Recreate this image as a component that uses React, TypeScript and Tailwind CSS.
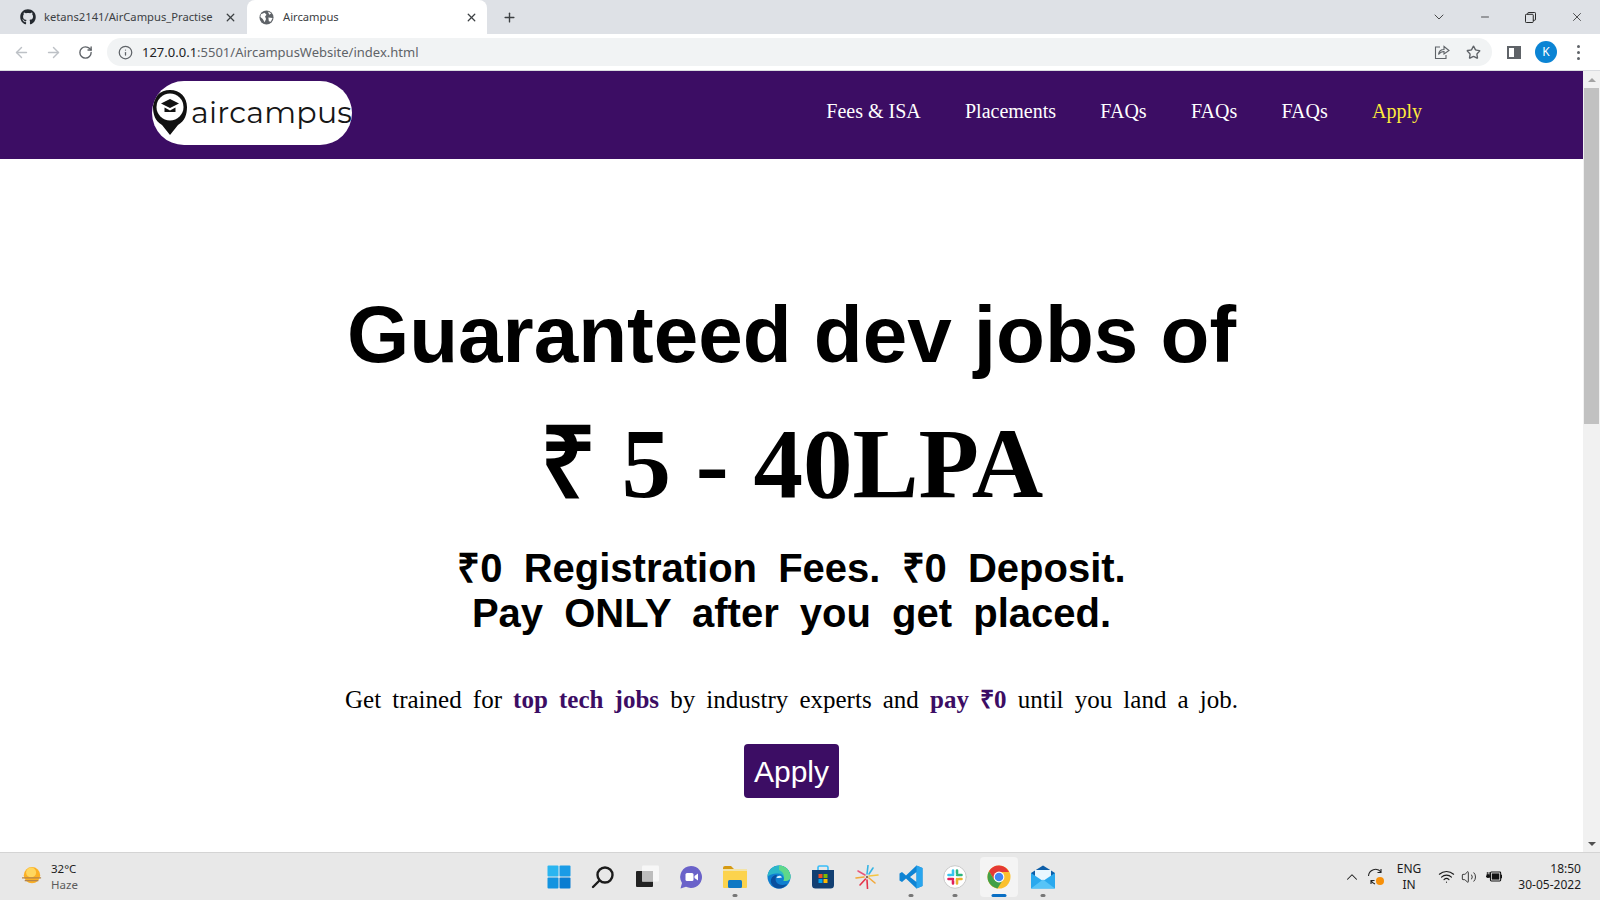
import React from 'react';
import { ArrowLeft, ArrowRight, RotateCw, Info, Star, ChevronDown, Minus, X, Plus, ChevronUp, Wifi, Volume2 } from 'lucide-react';
import { FaGithub } from 'react-icons/fa';

const navItems = ['Fees & ISA', 'Placements', 'FAQs', 'FAQs', 'FAQs'];

const Globe = () => (
  <svg viewBox="0 0 16 16" className="w-[15px] h-[15px]">
    <circle cx="8" cy="8" r="7.5" fill="#5f6368" />
    <path d="M2 4.5 L6 3 L8 5 L6.5 7 L7.5 9.5 L6 13 L4 9.5 L1.5 7.5 Z M9.5 1.5 L13 3.5 L11 5 Z M10 8 L14.5 8.5 L12.5 12.5 L10.5 12 Z" fill="#fff" />
  </svg>
);

const SharePage = () => (
  <svg viewBox="0 0 16 16" className="w-4 h-4" fill="none" stroke="#5f6368" strokeWidth="1.1">
    <path d="M6 3 H1.5 V14.5 H12 V11" />
    <path d="M4.5 10.5 C5 7 7.5 5.5 10 5.5 V2.5 L15 6.5 L10 10 V7.5 C8 7.5 6 8.5 4.5 10.5 Z" />
  </svg>
);

const RestoreIcon = () => (
  <svg viewBox="0 0 12 12" className="w-[11px] h-[11px]" fill="none" stroke="#111" strokeWidth="1">
    <rect x="0.5" y="2.5" width="8.5" height="9" rx="1" />
    <path d="M3 2.5 V1.5 Q3 0.5 4 0.5 H10.5 Q11.5 0.5 11.5 1.5 V8 Q11.5 9 10.5 9 H9" />
  </svg>
);

const Logo = () => (
  <div className="w-[200px] h-[64px] bg-white rounded-[32px] flex items-center overflow-hidden">
    <svg viewBox="0 0 36 48" className="w-[36px] h-[48px] shrink-0 -mt-[3px]">
      <path d="M18 47 L10 37 C3 33 1 26 1 19 C1 9 8 2 18 2 C28 2 35 9 35 19 C35 26 33 33 26 37 Z" fill="#111" />
      <circle cx="18" cy="19" r="13.5" fill="#fff" />
      <path d="M18 11 L27 15.5 L18 20 L9 15.5 Z" fill="#111" />
      <path d="M12.5 19.5 L18 22.5 L23.5 19.5 V24 H12.5 Z" fill="#111" />
    </svg>
    <span className="ml-[3px] font-['Montserrat','Open_Sans',sans-serif] text-[30px] leading-none text-[#161616] tracking-[0.25px]">aircampus</span>
  </div>
);

const TabBar = () => (
  <div className="h-[34px] bg-[#dee1e6] flex items-end font-['Noto_Sans',sans-serif] text-[11.2px] text-[#3c4043] shrink-0">
    <div className="w-[247px] h-[34px] flex items-center pl-[20px] pr-[10px]">
      <FaGithub className="w-4 h-4 text-[#24292f] shrink-0" />
      <span className="ml-[8px] flex-1 truncate">ketans2141/AirCampus_Practise</span>
      <X className="w-[13px] h-[13px] text-[#3c4043]" strokeWidth={2.4} />
    </div>
    <div className="w-[240px] h-[34px] bg-white rounded-t-[8px] flex items-center pl-[12px] pr-[9px]">
      <Globe />
      <span className="ml-[9px] flex-1">Aircampus</span>
      <X className="w-[13px] h-[13px] text-[#3c4043]" strokeWidth={2.4} />
    </div>
    <div className="h-[34px] flex items-center ml-[15px]">
      <Plus className="w-[15px] h-[15px] text-[#3c4043]" strokeWidth={2.2} />
    </div>
    <div className="ml-auto h-[34px] flex items-center">
      <ChevronDown className="w-[16px] h-[16px] text-[#222] mr-[32px]" strokeWidth={1.2} />
      <Minus className="w-[12px] h-[12px] text-[#111] mr-[34px]" strokeWidth={1.4} />
      <RestoreIcon />
      <X className="w-[14px] h-[14px] text-[#111] ml-[34px] mr-[16px]" strokeWidth={1.2} />
    </div>
  </div>
);

const ToolBar = () => (
  <div className="h-[37px] bg-white flex items-center border-b border-[#dadce0] shrink-0">
    <ArrowLeft className="w-[17px] h-[17px] text-[#bdc1c6] ml-[13px]" strokeWidth={2} />
    <ArrowRight className="w-[17px] h-[17px] text-[#bdc1c6] ml-[15px]" strokeWidth={2} />
    <RotateCw className="w-[15px] h-[15px] text-[#5f6368] ml-[16px]" strokeWidth={2.2} />
    <div className="ml-[14px] w-[1385px] h-[28px] rounded-[14px] bg-[#f1f3f4] flex items-center pl-[11px] pr-[11px]">
      <Info className="w-[15px] h-[15px] text-[#5f6368]" strokeWidth={2} />
      <span className="ml-[9px] pt-[1px] font-['Noto_Sans',sans-serif] text-[13px] text-[#5f6368]"><span className="text-[#202124]">127.0.0.1</span>:5501/AircampusWebsite/index.html</span>
      <div className="ml-auto flex items-center gap-[16px]">
        <SharePage />
        <Star className="w-[15px] h-[15px] text-[#5f6368]" strokeWidth={2.2} />
      </div>
    </div>
    <div className="ml-[15px] w-[14px] h-[13px] border-[2px] border-[#5f6368] border-r-[7px]" />
    <div className="ml-[14px] w-[22px] h-[22px] rounded-full bg-[#0b84d4] flex items-center justify-center text-white text-[12px] font-['Noto_Sans',sans-serif]">K</div>
    <div className="ml-[20px] flex flex-col gap-[3px]">
      <div className="w-[3px] h-[3px] rounded-full bg-[#5f6368]" />
      <div className="w-[3px] h-[3px] rounded-full bg-[#5f6368]" />
      <div className="w-[3px] h-[3px] rounded-full bg-[#5f6368]" />
    </div>
  </div>
);

const Scrollbar = () => (
  <div className="w-[17px] bg-[#f1f1f1] flex flex-col items-center shrink-0">
    <div className="h-[17px] flex items-center justify-center">
      <div className="w-0 h-0 border-x-[4px] border-x-transparent border-b-[4px] border-b-[#a3a3a3]" />
    </div>
    <div className="w-[15px] h-[336px] bg-[#c1c1c1]" />
    <div className="flex-1" />
    <div className="h-[17px] flex items-center justify-center">
      <div className="w-0 h-0 border-x-[4px] border-x-transparent border-t-[4px] border-t-[#505050]" />
    </div>
  </div>
);

const Page = () => (
  <div className="flex-1 min-w-0 flex flex-col bg-white overflow-hidden">
    <nav className="h-[88px] bg-[#3c0d64] flex items-center shrink-0 pl-[152px] pr-[161px] pb-[4px]">
      <Logo />
      <div className="ml-auto flex items-center gap-[44.25px] font-['Liberation_Serif',serif] text-[20px] text-white pb-[4px]">
        {navItems.map((item, i) => (
          <a key={i}>{item}</a>
        ))}
        <a className="text-[#ffeb3b]">Apply</a>
      </div>
    </nav>
    <main className="flex-1 flex flex-col items-center text-black pt-[130px]">
      <h1 className="font-['Liberation_Sans',sans-serif] font-bold text-[80px] leading-[92px]">Guaranteed dev jobs of</h1>
      <h2 className="mt-[28px] font-['Liberation_Serif',serif] font-bold text-[99px] leading-[110px]">₹ 5 - 40LPA</h2>
      <h3 className="mt-[27px] font-['Liberation_Sans',sans-serif] font-bold text-[40px] leading-[45px] text-center [word-spacing:10px]">
        ₹0 Registration Fees. ₹0 Deposit.<br />Pay ONLY after you get placed.
      </h3>
      <p className="mt-[49px] font-['Liberation_Serif',serif] text-[25px] leading-[30px] [word-spacing:4.9px]">
        Get trained for <b className="text-[#3c0d64]">top tech jobs</b> by industry experts and <b className="text-[#3c0d64]">pay ₹0</b> until you land a job.
      </p>
      <button className="mt-[29px] w-[95px] h-[54px] rounded-[4px] bg-[#3c0d64] text-white font-['Liberation_Sans',sans-serif] text-[30px]">Apply</button>
    </main>
  </div>
);

const WinLogo = () => (
  <svg viewBox="0 0 24 24" className="w-[24px] h-[24px]">
    <rect x="0.5" y="0.5" width="11" height="11" rx="1" fill="#2ab5f0" />
    <rect x="12.5" y="0.5" width="11" height="11" rx="1" fill="#1a9be6" />
    <rect x="0.5" y="12.5" width="11" height="11" rx="1" fill="#1293e0" />
    <rect x="12.5" y="12.5" width="11" height="11" rx="1" fill="#0b7dd1" />
  </svg>
);

const SearchGlyph = () => (
  <svg viewBox="0 0 24 24" className="w-[24px] h-[24px]" fill="none" stroke="#1c1c1c" strokeWidth="2.4">
    <circle cx="14" cy="10" r="7.5" />
    <path d="M8.5 15.5 L2 22" strokeLinecap="round" />
  </svg>
);

const TaskView = () => (
  <svg viewBox="0 0 24 24" className="w-[24px] h-[24px]">
    <rect x="1" y="6" width="17" height="16" rx="1" fill="#222" />
    <rect x="7" y="0.5" width="17" height="16" rx="1" fill="#f7f7f7" />
    <rect x="7" y="6" width="11" height="10.5" fill="#bdbdbd" />
  </svg>
);

const TeamsChat = () => (
  <svg viewBox="0 0 24 24" className="w-[24px] h-[24px]">
    <path d="M12 1 A11 11 0 1 1 7 21.8 L1.5 23.5 L3 18 A11 11 0 0 1 12 1 Z" fill="#6a62c9" />
    <rect x="6.5" y="8" width="8" height="8" rx="1.5" fill="#fff" />
    <path d="M15.5 11 L19 8.5 V15.5 L15.5 13 Z" fill="#fff" />
  </svg>
);

const Folder = () => (
  <svg viewBox="0 0 24 24" className="w-[24px] h-[24px]">
    <path d="M0 3 Q0 1 2 1 H8 L11 4 H24 V8 H0 Z" fill="#d69a12" />
    <rect x="0" y="4" width="24" height="19" rx="1" fill="#fcd34d" />
    <rect x="0" y="4" width="24" height="2" fill="#f3e3a6" />
    <rect x="5" y="15" width="14" height="8" rx="1.5" fill="#0f78c4" />
  </svg>
);

const Edge = () => (
  <svg viewBox="0 0 24 24" className="w-[24px] h-[24px]">
    <circle cx="12" cy="12" r="11.5" fill="#0f7fd0" />
    <path d="M0.5 12 C1 4 7 0.5 12 0.5 C19 0.5 23.5 6 23.5 12 C23.5 15 20 16.5 16.5 16 C18 13 16 8.5 11 8.5 C6 8.5 2 10 0.5 12 Z" fill="#2bb8c9" />
    <path d="M12 0.5 C19 0.5 23.5 6 23.5 12 C23.5 15 20 16.5 16.5 16 C18 12 17 7 12 5 Z" fill="#5fd88a" />
    <path d="M9 12 C7 17 12 22 20 19 C18 22 14.5 23.5 12 23.5 C7 23.5 3 19 4 14.5 C5 11 8 9.5 10 10 Z" fill="#0a4f9e" />
    <path d="M9.5 13 C10 10.5 14 10 15 12.5 C13 13 11 13 9.5 13 Z" fill="#d9f2ff" />
  </svg>
);

const StoreIcon = () => (
  <svg viewBox="0 0 24 24" className="w-[24px] h-[24px]">
    <path d="M7 5 V2.5 Q7 1 8.5 1 H15.5 Q17 1 17 2.5 V5" fill="none" stroke="#38bdf8" strokeWidth="1.6" />
    <path d="M1 5 H23 V20 Q23 23.5 19.5 23.5 H4.5 Q1 23.5 1 20 Z" fill="#123f72" />
    <rect x="7.5" y="9" width="4" height="4" fill="#f25022" />
    <rect x="12.5" y="9" width="4" height="4" fill="#7fba00" />
    <rect x="7.5" y="14" width="4" height="4" fill="#00a4ef" />
    <rect x="12.5" y="14" width="4" height="4" fill="#ffb900" />
  </svg>
);

const Sparkle = () => (
  <svg viewBox="0 0 24 24" className="w-[24px] h-[24px]" strokeWidth="1.6" strokeLinecap="round">
    <path d="M12 9 L13 0.5" stroke="#34b4e4" />
    <path d="M14 11 L23 10" stroke="#f4c542" />
    <path d="M14 13 L20 18" stroke="#f2a93b" />
    <path d="M12 15 L12.5 23.5" stroke="#e5344a" />
    <path d="M10.5 14 L5 20" stroke="#e5344a" />
    <path d="M9 12 L1 13" stroke="#f2a93b" />
    <path d="M10 10 L3 6" stroke="#e8567a" />
    <path d="M14 9 L18 3" stroke="#34b4e4" />
    <circle cx="12" cy="12" r="1.2" fill="#8a6d5a" stroke="none" />
  </svg>
);

const VSCode = () => (
  <svg viewBox="0 0 24 24" className="w-[24px] h-[24px]">
    <path d="M17.5 0.5 L23.5 3 V21 L17.5 23.5 L7 13.5 L3 17 L0.5 15.5 V8.5 L3 7 L7 10.5 Z M17.5 7 L11 12 L17.5 17 Z" fill="#0f84d4" />
    <path d="M17.5 0.5 L23.5 3 V21 L17.5 23.5 Z" fill="#28a5ee" />
  </svg>
);

const Slack = () => (
  <svg viewBox="0 0 24 24" className="w-[24px] h-[24px]" strokeWidth="2.6" strokeLinecap="round">
    <circle cx="12" cy="12" r="11.3" fill="#fff" stroke="#c9c9c9" strokeWidth="1" />
    <path d="M10 5.5 V10 M5.5 10 H8" stroke="#36c5f0" />
    <path d="M18.5 10 H14 M14 5.5 V8" stroke="#2eb67d" />
    <path d="M14 18.5 V14 M18.5 14 H16" stroke="#ecb22e" />
    <path d="M5.5 14 H10 M10 18.5 V16" stroke="#e01e5a" />
  </svg>
);

const Chrome = () => (
  <svg viewBox="0 0 24 24" className="w-[24px] h-[24px]">
    <circle cx="12" cy="12" r="11.5" fill="#fbc02d" />
    <path d="M12 .5 A11.5 11.5 0 0 0 2 6.3 L7 14.5 L12 7 H22 A11.5 11.5 0 0 0 12 .5 Z" fill="#e53935" />
    <path d="M2 6.3 A11.5 11.5 0 0 0 10.5 23.4 L15.5 15.5 L7 14.5 Z" fill="#43a047" />
    <circle cx="12" cy="12" r="5.4" fill="#fff" />
    <circle cx="12" cy="12" r="4.3" fill="#4285f4" />
  </svg>
);

const Mail = () => (
  <svg viewBox="0 0 24 24" className="w-[24px] h-[24px]">
    <path d="M0 8 L12 0.5 L24 8 V12 H0 Z" fill="#0d5ea8" />
    <path d="M4 5 H20 V15 H4 Z" fill="#e8f6ff" />
    <path d="M0 8 L12 16 L24 8 V23.5 H0 Z" fill="#2aa9ee" />
    <path d="M0 23.5 L12 14.5 L24 23.5 Z" fill="#57c4f7" />
  </svg>
);

const taskbarApps: { icon: React.ReactNode; dot?: boolean; active?: boolean }[] = [
  { icon: <WinLogo /> },
  { icon: <SearchGlyph /> },
  { icon: <TaskView /> },
  { icon: <TeamsChat /> },
  { icon: <Folder />, dot: true },
  { icon: <Edge /> },
  { icon: <StoreIcon /> },
  { icon: <Sparkle /> },
  { icon: <VSCode />, dot: true },
  { icon: <Slack />, dot: true },
  { icon: <Chrome />, active: true },
  { icon: <Mail />, dot: true },
];

const Weather = () => (
  <svg viewBox="0 0 22 24" className="w-[20px] h-[22px]">
    <circle cx="11" cy="10" r="9" fill="#fbb024" />
    <circle cx="10" cy="7" r="5.5" fill="#ffd75e" />
    <path d="M0 13 H21 M3 16 H18" stroke="#b5854a" strokeWidth="1.5" />
  </svg>
);

const SyncIcon = () => (
  <svg viewBox="0 0 18 18" className="w-[18px] h-[18px]" fill="none" stroke="#222" strokeWidth="1.1">
    <path d="M1.5 8 A7 7 0 0 1 14 4 M14 1 V4.5 H10.5" />
    <path d="M4 16 V12.5 H7.5 M4 12.5 A7 7 0 0 0 8 16" />
    <circle cx="13" cy="13" r="4" fill="#f79009" stroke="none" />
  </svg>
);

const PowerIcon = () => (
  <svg viewBox="0 0 18 12" className="w-[16px] h-[11px]">
    <rect x="5" y="1" width="11.5" height="10" rx="1" fill="none" stroke="#111" strokeWidth="1.2" />
    <rect x="6.5" y="2.5" width="8.5" height="7" fill="#111" />
    <rect x="16.5" y="4" width="1.5" height="4" fill="#111" />
    <path d="M0 6 H5 M1.5 1 V4 M3.5 1 V4 M1 4 H4 V7 H1 Z" stroke="#111" strokeWidth="1" fill="#111" />
  </svg>
);

const Taskbar = () => (
  <div className="h-[48px] bg-[#e8e8e8] border-t border-[#d4d4d4] flex items-center shrink-0 relative font-['Noto_Sans',sans-serif]">
    <div className="w-[528px] flex items-center pl-[22px] shrink-0">
      <Weather />
      <div className="ml-[9px] text-[11.5px] leading-[16px]">
        <div className="text-[#1c1c1c]">32°C</div>
        <div className="text-[#5c5c5c]">Haze</div>
      </div>
    </div>
    <div className="flex items-center gap-[6px] ml-[12px]">
      {taskbarApps.map((app, i) => (
        <div key={i} className={`relative w-[38px] h-[40px] rounded-[4px] flex items-center justify-center ${app.active ? 'bg-[#f4f4f4]' : ''}`}>
          {app.icon}
          {app.dot && <div className="absolute bottom-0 left-1/2 -translate-x-1/2 w-[5px] h-[3px] rounded-full bg-[#777]" />}
          {app.active && <div className="absolute bottom-0 left-1/2 -translate-x-1/2 w-[15px] h-[3px] rounded-full bg-[#0a6fc4]" />}
        </div>
      ))}
    </div>
    <div className="ml-auto flex items-center text-[#1c1c1c] text-[12px] pr-[19px]">
      <ChevronUp className="w-[18px] h-[18px]" strokeWidth={1.4} />
      <div className="ml-[6px]"><SyncIcon /></div>
      <div className="ml-[12px] text-center leading-[16px]">ENG<br />IN</div>
      <Wifi className="ml-[17px] w-[17px] h-[17px]" strokeWidth={1.6} />
      <Volume2 className="ml-[6px] w-[16px] h-[16px]" strokeWidth={1.3} />
      <div className="ml-[9px]"><PowerIcon /></div>
      <div className="ml-[16px] text-right leading-[16px]">18:50<br />30-05-2022</div>
    </div>
  </div>
);

export default function App() {
  return (
    <div className="w-[1600px] h-[900px] flex flex-col overflow-hidden">
      <TabBar />
      <ToolBar />
      <div className="flex-1 min-h-0 flex">
        <Page />
        <Scrollbar />
      </div>
      <Taskbar />
    </div>
  );
}
